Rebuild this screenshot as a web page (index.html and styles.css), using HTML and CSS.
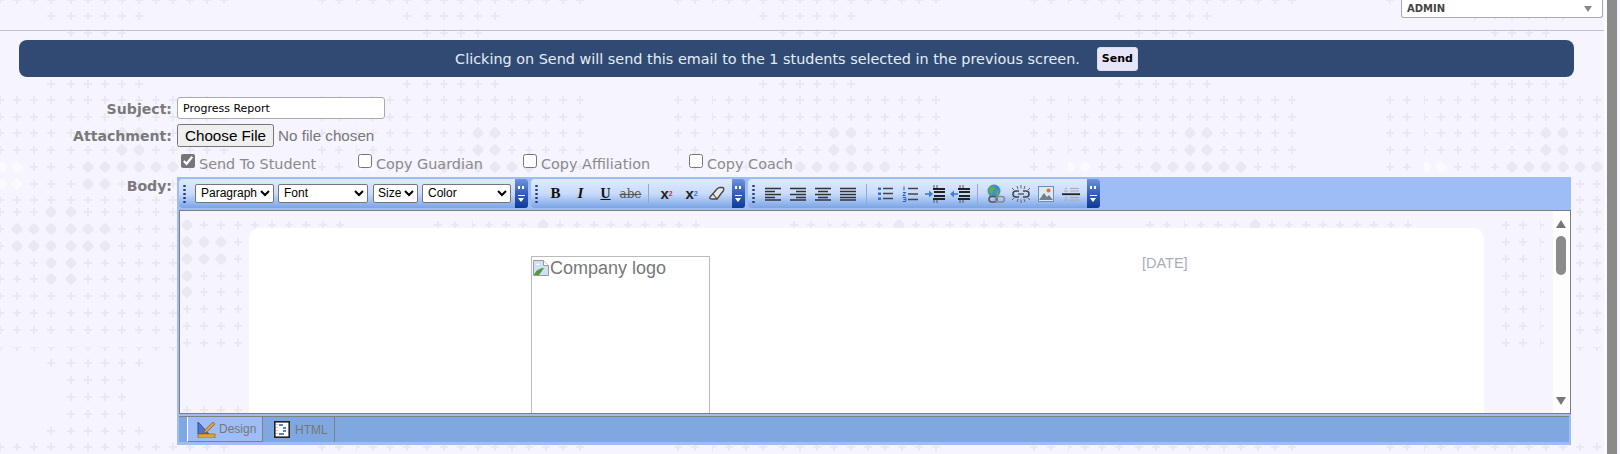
FILE: index.html
```html
<!DOCTYPE html>
<html lang="en">
<head>
  <meta charset="UTF-8">
  <title>Send Email</title>
  <link rel="stylesheet" href="styles.css">
</head>
<body>
  <div class="page">
    <!-- top bar -->
    <div class="topbar">
      <div class="role-select">ADMIN <span class="role-arrow"></span></div>
    </div>

    <div class="banner">
      <span>Clicking on Send will send this email to the 1 students selected in the previous screen.</span>
      <button class="send-btn">Send</button>
    </div>

    <div class="form">
      <label class="lbl lbl-subject">Subject:</label>
      <div><input class="subject" type="text" value="Progress Report"></div>

      <label class="lbl">Attachment:</label>
      <div><input class="attach" type="file"></div>

      <div></div>
      <div class="checks">
        <label class="chk chk-send"><input type="checkbox" checked>Send To Student</label>
        <label class="chk chk-guardian"><input type="checkbox">Copy Guardian</label>
        <label class="chk chk-affil"><input type="checkbox">Copy Affiliation</label>
        <label class="chk"><input type="checkbox">Copy Coach</label>
      </div>

      <label class="lbl lbl-body">Body:</label>
      <div class="editor">
        <div class="toolbar">
          <div class="tgroup tgroup-1">
            <span class="grip"></span>
            <select class="sel sel-para"><option>Paragraph</option></select>
            <select class="sel sel-font"><option>Font</option></select>
            <select class="sel sel-size"><option>Size</option></select>
            <select class="sel sel-color"><option>Color</option></select>
            <span class="over"><i class="over-top"></i><i class="over-bot"></i></span>
          </div>

          <div class="tgroup tgroup-2">
            <span class="grip"></span>
            <span class="tb tb-b">B</span>
            <span class="tb tb-i">I</span>
            <span class="tb tb-u">U</span>
            <span class="tb tb-s">abe</span>
            <span class="sep sep-11"></span>
            <span class="tb tb-x">x<sup class="red">2</sup></span>
            <span class="tb tb-x">x<sub class="blue">2</sub></span>
            <span class="tb">
              <svg width="18" height="16" viewBox="0 0 18 16"><path d="M2 11 9 3c1-1 2-1.500 3-1.500h2c1.500 0 2.500 1.500 1.500 3L9 13H4.500C2.500 13 1 12.500 2 11z" fill="#e8e8e8" stroke="#444" stroke-width="1.300"/><path d="M5 8l4 5" stroke="#444" stroke-width="1.200"/></svg>
            </span>
            <span class="over"><i class="over-top"></i><i class="over-bot"></i></span>
          </div>

          <div class="tgroup tgroup-3">
            <span class="grip"></span>
            <span class="tb"><svg width="16" height="14" viewBox="0 0 16 14" stroke="#333" stroke-width="1.300"><path d="M0 1.500h16M0 4.500h10M0 7.500h16M0 10.500h10M0 13h16"/></svg></span>
            <span class="tb"><svg width="16" height="14" viewBox="0 0 16 14" stroke="#333" stroke-width="1.300"><path d="M0 1.500h16M6 4.500h10M0 7.500h16M6 10.500h10M0 13h16"/></svg></span>
            <span class="tb"><svg width="16" height="14" viewBox="0 0 16 14" stroke="#333" stroke-width="1.300"><path d="M0 1.500h16M3 4.500h10M0 7.500h16M3 10.500h10M0 13h16"/></svg></span>
            <span class="tb"><svg width="16" height="14" viewBox="0 0 16 14" stroke="#333" stroke-width="1.300"><path d="M0 1.500h16M0 4.500h16M0 7.500h16M0 10.500h16M0 13h16"/></svg></span>
            <span class="sep sep-12"></span>
            <span class="tb"><svg width="16" height="15" viewBox="0 0 16 15"><path d="M6 2.500h10M6 7.500h10M6 12.500h10" stroke="#444" stroke-width="1.300"/><path d="M1 1.500h3v2.500H1zM1 6.500h3V9H1zM1 11.500h3V14H1z" fill="#3f6cc0"/></svg></span>
            <span class="tb"><svg width="16" height="16" viewBox="0 0 16 16"><path d="M6 2.500h10M6 8h10M6 13.500h10" stroke="#444" stroke-width="1.300"/><path d="M2 .5v4M.8 6.500h3l-3 3h3M.8 11.500h3v4h-3M1.500 13.500h2" fill="none" stroke="#2f5fc0"/></svg></span>
            <span class="tb"><svg width="20" height="18" viewBox="0 0 20 18"><path d="M9 0v3M12 0v3M9 15v3M12 15v3" stroke="#555"/><path d="M8 4h12M9 7h11M9 11h11M8 14h12" stroke="#222" stroke-width="1.800"/><path d="M0 9h5" stroke="#3f7bd8" stroke-width="1.600"/><path d="M4 5.500 8 9l-4 3.500z" fill="#3f7bd8"/></svg></span>
            <span class="tb"><svg width="20" height="18" viewBox="0 0 20 18"><path d="M10 0v3M13 0v3M10 15v3M13 15v3" stroke="#555"/><path d="M8 4h12M9 7h11M9 11h11M8 14h12" stroke="#222" stroke-width="1.800"/><path d="M3 9h5" stroke="#3f7bd8" stroke-width="1.600"/><path d="M4 5.500 0 9l4 3.500z" fill="#3f7bd8"/></svg></span>
            <span class="sep sep-11"></span>
            <span class="tb"><svg width="20" height="20" viewBox="0 0 20 20"><circle cx="8" cy="7" r="6.500" fill="#3f8fd0"/><path d="M4 3c2-1 4 0 5 1 0 2-2 2-2 4s-2 3-3 1-2-4 0-6zM10 7l3-1c0 3-1 5-3 6z" fill="#5fb040"/><rect x="3" y="12.500" width="8" height="5.500" rx="2.700" fill="none" stroke="#555" stroke-width="1.500"/><rect x="9.500" y="12.500" width="9" height="5.500" rx="2.700" fill="none" stroke="#8a8a8a" stroke-width="1.500"/></svg></span>
            <span class="tb"><svg width="20" height="18" viewBox="0 0 20 18" fill="none" stroke="#444"><path d="M8 6H5a3 3 0 0 0 0 6h3M12 6h3a3 3 0 0 1 0 6h-3" stroke-width="1.500"/><path d="M7 9h6" stroke-width="1.200"/><path d="M6 1l1 3M10 0v3.500M14 1l-1 3M6 17l1-3M10 18v-3.500M14 17l-1-3M1 3l2 2M19 3l-2 2M1 15l2-2M19 15l-2-2" stroke="#666"/></svg></span>
            <span class="tb"><svg width="16" height="16" viewBox="0 0 16 16"><rect x=".5" y=".5" width="15" height="15" fill="#dfe9f5" stroke="#6d8fb5"/><path d="M1 14l5-7 3 4 2-2 4 5z" fill="#6f7f90"/><circle cx="10.500" cy="4.500" r="2" fill="#e8702a"/></svg></span>
            <span class="tb"><svg width="18" height="16" viewBox="0 0 18 16"><path d="M3 2.500h2M2 5h4M3 11.500h2M2 14h4" stroke="#aaa" stroke-width="1.200"/><path d="M8 2.500h9M8 5h9M8 11.500h9M8 14h9" stroke="#a9a9a9" stroke-width="1.200"/><path d="M0 8.200h18" stroke="#222" stroke-width="1.800"/></svg></span>
            <span class="over"><i class="over-top"></i><i class="over-bot"></i></span>
          </div>
        </div>

        <div class="frame">
          <div class="frame-body">
            <div class="doc">
              <div class="logo-cell">
                <svg class="broken" width="16" height="16" viewBox="0 0 16 16"><path d="M.5.5h10l5 5v10H.5z" fill="#cfe0f5" stroke="#9a9a9a"/><path d="M10.500.5v5h5" fill="#fff" stroke="#9a9a9a"/><path d="M1 15c2-5 6-7 10-7l-5 7z" fill="#4f9a3a"/><path d="M3 5c1-2 3-2 4 0z" fill="#fff"/></svg>Company logo
              </div>
              <div class="date-cell">[DATE]</div>
            </div>
          </div>
          <div class="vscroll">
            <span class="arrow-up"></span>
            <span class="thumb"></span>
            <span class="arrow-down"></span>
          </div>
        </div>

        <div class="modes">
          <div class="mode mode-on">
            <svg width="19" height="18" viewBox="0 0 19 18"><path d="M1 2v12h11z" fill="#4f74c8" stroke="#2f4f9a"/><path d="M8 10 16 2l2 2-8 8-3 1z" fill="#d8a040" stroke="#8a5a20" stroke-width=".7"/><rect x="1" y="14" width="17" height="4" fill="#d8a83a" stroke="#8a6a20" stroke-width=".7"/></svg>
            Design
          </div>
          <div class="mode">
            <svg width="16" height="17" viewBox="0 0 16 17"><rect x=".8" y=".8" width="14.400" height="15.400" fill="#fff" stroke="#222" stroke-width="1.600"/><path d="M5 4h4M9 7h3M9 10h3M5 13h5" stroke="#3050d0" stroke-width="1.400"/><path d="M3 3v11" stroke="#999" stroke-dasharray="1 2"/></svg>
            HTML
          </div>
        </div>
      </div>
    </div>
  </div>

  <div class="rail"></div>
</body>
</html>
```

FILE: styles.css
```css
html, body {
    margin: 0;
    height: 454px;
    overflow: hidden;
}

body {
    display: flex;
    background-color: #f5f4ff;
    font-family: "DejaVu Sans", Verdana, sans-serif;
}

/* page background: the pale plus tile */
.page {
    width: 1604px;
    flex-shrink: 0;
    background-color: #f5f4ff;
    background-image: url("data:image/svg+xml,<svg xmlns='http://www.w3.org/2000/svg' width='356' height='347'><defs><path id='p' d='M-1-4h2v3h3v2h-3v3h-2v-3h-3v-2h3z' fill='%23e9e8f4'/><rect id='d' x='-4.500' y='-4.500' width='9' height='9' rx='2' transform='rotate(45)' fill='%23e9e8f3'/><rect id='w' x='-4.500' y='-4.500' width='9' height='9' rx='2' transform='rotate(45)' fill='%23fbfbff'/><g id='m'><use href='%23p' x='71'/><use href='%23p' x='88'/><use href='%23p' x='105'/><use href='%23p' x='122'/></g><g id='n'><use href='%23m'/><use href='%23p' x='51'/><use href='%23p' x='139'/></g><g id='r'><use href='%23n'/><use href='%23p' x='0'/><use href='%23p' x='17'/><use href='%23p' x='34'/><use href='%23p' x='156'/><use href='%23p' x='173'/><use href='%23p' x='190'/><use href='%23p' x='207'/><use href='%23p' x='224'/><use href='%23p' x='322'/><use href='%23p' x='339'/></g></defs><use href='%23r' y='0'/><use href='%23n' y='16'/><use href='%23m' y='33'/><use href='%23m' y='50'/><use href='%23m' y='67'/><use href='%23n' y='84'/><use href='%23r' y='100'/><use href='%23r' y='117'/><use href='%23r' y='133'/><use href='%23r' y='150'/><use href='%23r' y='167'/><use href='%23r' y='184'/><use href='%23r' y='200'/><use href='%23r' y='212'/><use href='%23r' y='229'/><use href='%23r' y='246'/><use href='%23r' y='263'/><use href='%23r' y='279'/><use href='%23r' y='296'/><use href='%23r' y='313'/><use href='%23r' y='330'/><g fill='%23f5f4ff'><rect x='116' y='127' width='30' height='30'/><rect x='82' y='161' width='98' height='13'/><rect x='82' y='178' width='30' height='13'/><rect x='45' y='206' width='32' height='12'/><rect x='11' y='223' width='100' height='29'/><rect x='45' y='257' width='32' height='28'/><rect x='-6' y='161' width='30' height='30'/></g><use href='%23d' x='122' y='133'/><use href='%23d' x='139' y='133'/><use href='%23d' x='122' y='150'/><use href='%23d' x='139' y='150'/><use href='%23d' x='88' y='167'/><use href='%23d' x='105' y='167'/><use href='%23d' x='122' y='167'/><use href='%23d' x='139' y='167'/><use href='%23d' x='156' y='167'/><use href='%23d' x='173' y='167'/><use href='%23d' x='88' y='184'/><use href='%23d' x='105' y='184'/><use href='%23d' x='51' y='212'/><use href='%23d' x='71' y='212'/><use href='%23d' x='17' y='229'/><use href='%23d' x='34' y='229'/><use href='%23d' x='51' y='229'/><use href='%23d' x='71' y='229'/><use href='%23d' x='88' y='229'/><use href='%23d' x='105' y='229'/><use href='%23d' x='17' y='246'/><use href='%23d' x='34' y='246'/><use href='%23d' x='51' y='246'/><use href='%23d' x='71' y='246'/><use href='%23d' x='88' y='246'/><use href='%23d' x='105' y='246'/><use href='%23d' x='51' y='263'/><use href='%23d' x='71' y='263'/><use href='%23d' x='51' y='279'/><use href='%23d' x='71' y='279'/><use href='%23w' x='2' y='167'/><use href='%23w' x='17' y='167'/><use href='%23w' x='2' y='184'/><use href='%23w' x='17' y='184'/></svg>");
}

.rail {
    width: 10px;
    height: 454px;
    margin-left: 3px;
    background-color: #8b8b8b;
    box-shadow: -3px 0 0 #fbfbff;
}

/* top bar */
.topbar {
    height: 30px;
    border-bottom: 1px solid #c4c4c8;
    display: flex;
    justify-content: flex-end;
    padding-right: 1px;
}

.role-select {
    width: 202px;
    height: 18px;
    box-sizing: border-box;
    background: #fff;
    border: 1px solid #aaa;
    border-top: none;
    border-radius: 0 0 3px 3px;
    padding-left: 5px;
    font-size: 10px;
    font-weight: bold;
    line-height: 15px;
    color: #444;
    display: flex;
    justify-content: space-between;
    align-items: center;
}

.role-arrow {
    width: 0;
    height: 0;
    margin-right: 10px;
    border-left: 4px solid transparent;
    border-right: 4px solid transparent;
    border-top: 6px solid #888;
}

/* banner */
.banner {
    width: 1555px;
    height: 37px;
    margin: 9px 0 0 19px;
    background: #304a73;
    border-radius: 8px;
    color: #e4eef6;
    font-size: 14.4px;
    display: flex;
    justify-content: center;
    align-items: center;
    gap: 17px;
    box-sizing: border-box;
}

.send-btn {
    width: 41px;
    height: 24px;
    padding: 0;
    background: #e6e5fa;
    border: 1px solid #dcdcec;
    border-radius: 3px;
    font-family: "DejaVu Sans", Verdana, sans-serif;
    font-size: 11px;
    font-weight: bold;
    color: #000;
}

/* form */
.form {
    display: grid;
    grid-template-columns: 172px 1394px;
    grid-template-rows: 22px 23px 16px 268px;
    column-gap: 5px;
    row-gap: 6px;
    margin-top: 20px;
}

.form > :nth-child(n+7) {
    margin-top: 1px;
}

.lbl {
    text-align: right;
    font-size: 14.1px;
    font-weight: bold;
    color: #7a7a7a;
    line-height: 23px;
}

.lbl-subject {
    padding-top: 1px;
}

.lbl-body {
    line-height: 17px;
    padding-top: 1px;
}

.subject {
    display: block;
    width: 208px;
    height: 22px;
    box-sizing: border-box;
    padding: 1px 0 0 5px;
    border: 1px solid #a9a9a9;
    border-radius: 3px;
    font-family: "DejaVu Sans", Verdana, sans-serif;
    font-size: 11px;
    color: #000;
    outline: none;
}

.attach {
    display: block;
    width: 220px;
    height: 23px;
    margin-top: -1px;
    font-family: "Liberation Sans", Arial, sans-serif;
    font-size: 15.2px;
    color: #777;
}

.checks {
    display: flex;
    padding: 2px 0 0 4px;
    height: 16px;
}

.chk {
    display: flex;
    align-items: center;
    font-size: 14.4px;
    color: #8a8a8a;
    white-space: nowrap;
}

.chk input {
    width: 14px;
    height: 14px;
    margin: -6px 4px 0 0;
    accent-color: #767676;
}

.chk-send { width: 177px; }
.chk-guardian { width: 165px; }
.chk-affil { width: 166px; }

/* editor */
.editor {
    width: 1394px;
    height: 268px;
    background: #9ebcf5;
}

.toolbar {
    height: 33px;
    box-sizing: border-box;
    padding: 2px 0 0 2px;
    display: flex;
    gap: 3px;
}

.tgroup {
    height: 29px;
    display: flex;
    align-items: center;
    border-radius: 4px 3px 3px 4px;
    background: linear-gradient(#dfeafe, #c8dbfb 50%, #7ba4e6);
}

.tgroup-1 { width: 349px; }
.tgroup-2 { width: 214px; }
.tgroup-3 { width: 352px; }

.grip {
    width: 12px;
    height: 20px;
    flex-shrink: 0;
    background-image: radial-gradient(circle at 50% 50%, #23406f 1px, transparent 1.400px);
    background-size: 11px 4px;
    background-repeat: repeat-y;
}

.tgroup-1 .grip {
    width: 10px;
}

.sel {
    height: 19px;
    margin: -1px 4px 0 0;
    padding: 0 0 0 1px;
    background: #fff;
    border: 1px solid #767676;
    border-radius: 2px;
    font-family: "Liberation Sans", Arial, sans-serif;
    font-size: 12px;
    color: #000;
}

.sel-para { width: 79px; margin-left: 6px; }
.sel-font { width: 90px; margin-right: 5px; }
.sel-size { width: 45px; padding-left: 0; }
.sel-color { width: 89px; margin-right: 3px; }

.tb {
    width: 25px;
    height: 24px;
    flex-shrink: 0;
    display: flex;
    justify-content: center;
    align-items: center;
    color: #111;
}

.tb-b { font: bold 15px "Liberation Serif", serif; }
.tb-i { font: italic bold 15px "Liberation Serif", serif; }
.tb-u { font: bold 14px "Liberation Serif", serif; text-decoration: underline; }
.tb-s { font: 12px "DejaVu Serif", serif; color: #555; text-decoration: line-through; }
.tb-x { font: bold 15px "Liberation Sans", sans-serif; color: #222; }
.tb-x sup, .tb-x sub { font-size: 7px; }
.red { color: #d03030; }
.blue { color: #3a6fd0; }

.sep {
    height: 20px;
    flex-shrink: 0;
    background: linear-gradient(#8fa9d4, #8fa9d4) center / 1px 100% no-repeat;
}

.sep-11 { width: 11px; }
.sep-12 { width: 12px; }

.over {
    width: 13px;
    height: 29px;
    margin-left: auto;
    flex-shrink: 0;
    position: relative;
    border-radius: 0 3px 3px 0;
    background: linear-gradient(#6f93dc, #3b63bd 45%, #0c3a98);
}

.over i {
    position: absolute;
    left: 3px;
}

.over-top {
    top: 7px;
    width: 7px;
    height: 3px;
    background: linear-gradient(90deg, #fff 2px, transparent 2px 4px, #fff 4px 6px, transparent 6px);
}

.over-bot {
    top: 19px;
    width: 0;
    height: 0;
    border-left: 3.500px solid transparent;
    border-right: 3.500px solid transparent;
    border-top: 4px solid #fff;
}

.over-bot::before {
    content: "";
    position: absolute;
    left: -3.500px;
    top: -7px;
    width: 7px;
    height: 1px;
    background: #fff;
}

/* editing frame */
.frame {
    height: 204px;
    box-sizing: border-box;
    margin-left: 2px;
    border: 1px solid #7e7e7e;
    display: flex;
    overflow: hidden;
}

.frame-body {
    flex: 1;
    overflow: hidden;
    background-color: #f5f4ff;
    background-image: url("data:image/svg+xml,<svg xmlns='http://www.w3.org/2000/svg' width='356' height='347'><defs><path id='p' d='M-1-4h2v3h3v2h-3v3h-2v-3h-3v-2h3z' fill='%23e9e8f4'/><rect id='d' x='-4.500' y='-4.500' width='9' height='9' rx='2' transform='rotate(45)' fill='%23e9e8f3'/><g id='m'><use href='%23p' x='71'/><use href='%23p' x='88'/><use href='%23p' x='105'/><use href='%23p' x='122'/></g><g id='n'><use href='%23m'/><use href='%23p' x='51'/><use href='%23p' x='139'/></g><g id='r'><use href='%23n'/><use href='%23p' x='0'/><use href='%23p' x='17'/><use href='%23p' x='34'/><use href='%23p' x='156'/><use href='%23p' x='173'/><use href='%23p' x='190'/><use href='%23p' x='207'/><use href='%23p' x='224'/><use href='%23p' x='322'/><use href='%23p' x='339'/></g></defs><use href='%23m' y='50'/><use href='%23m' y='67'/><use href='%23r' y='212'/><use href='%23r' y='229'/><use href='%23r' y='246'/><use href='%23r' y='263'/><use href='%23r' y='279'/><use href='%23r' y='296'/><use href='%23r' y='313'/><use href='%23r' y='330'/><g fill='%23f5f4ff'><rect x='65' y='206' width='12' height='12'/><rect x='65' y='223' width='46' height='29'/><rect x='65' y='257' width='12' height='28'/></g><use href='%23d' x='71' y='212'/><use href='%23d' x='71' y='229'/><use href='%23d' x='88' y='229'/><use href='%23d' x='105' y='229'/><use href='%23d' x='71' y='246'/><use href='%23d' x='88' y='246'/><use href='%23d' x='105' y='246'/><use href='%23d' x='71' y='263'/><use href='%23d' x='71' y='279'/></svg>");
    background-position: -64px -198px;
}

.doc {
    width: 1235px;
    height: 300px;
    margin: 17px 0 0 69px;
    background: #fff;
    border-radius: 10px;
    display: flex;
    font-family: "Liberation Sans", Arial, sans-serif;
}

.logo-cell {
    width: 177px;
    height: 240px;
    margin: 28px 0 0 282px;
    border: 1px solid #bbb;
    font-size: 18px;
    line-height: 22px;
    color: #777;
    flex-shrink: 0;
}

.broken {
    vertical-align: -2px;
    margin: 1px 1px 0 1px;
}

.date-cell {
    margin: 27px 0 0 432px;
    font-size: 14.500px;
    color: #a9aeb6;
}

.vscroll {
    width: 17px;
    flex-shrink: 0;
    background: #fdfdfd;
    position: relative;
}

.thumb {
    position: absolute;
    left: 3px;
    top: 25px;
    width: 10px;
    height: 39px;
    border-radius: 5px;
    background: #8b8b8b;
}

.arrow-up, .arrow-down {
    position: absolute;
    left: 3px;
    width: 0;
    height: 0;
    border-left: 5px solid transparent;
    border-right: 5px solid transparent;
}

.arrow-up {
    top: 9px;
    border-bottom: 8px solid #777;
}

.arrow-down {
    top: 186px;
    border-top: 8px solid #777;
}

/* design / html strip */
.modes {
    width: 1390px;
    height: 26px;
    box-sizing: border-box;
    margin: 2px 0 0 2px;
    background: #7fa7e0;
    border-top: 1px solid #808080;
    display: flex;
    padding-left: 8px;
    font-family: "Liberation Sans", Arial, sans-serif;
    font-size: 12px;
    color: #777;
}

.mode {
    display: flex;
    align-items: center;
    gap: 5px;
    width: 72px;
    height: 25px;
    box-sizing: border-box;
    border-right: 1px solid #808080;
    padding-left: 11px;
}

.mode-on {
    width: 76px;
    padding-left: 9px;
    gap: 3px;
    background: #9ebcf5;
    border-left: 1px solid #fff;
    border-bottom: 1px solid #808080;
}
```
